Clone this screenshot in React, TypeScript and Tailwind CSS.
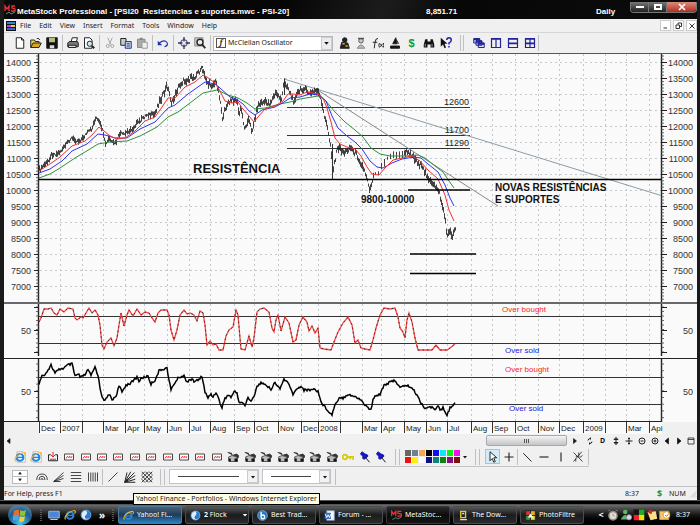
import React from "react";

type Pt = [number, number];

const parse = (s: string): Pt[] =>
  s.trim().split(/\s+/).map((p) => p.split(",").map(Number) as Pt);

/* ---------- chart data ---------- */

const MONTHS: [number, string][] = [
  [39, "Dec"], [60, "2007"], [82, ""], [103, "Mar"], [125, "Apr"], [144, "May"], [167, "Jun"],
  [189, "Jul"], [210, "Aug"], [234, "Sep"], [254, "Oct"], [278, "Nov"], [301, "Dec"], [318, "2008"],
  [340, ""], [362, "Mar"], [381, "Apr"], [404, "May"], [426, "Jun"], [447, "Jul"], [471, "Aug"],
  [492, "Sep"], [515, "Oct"], [538, "Nov"], [559, "Dec"], [583, "2009"], [605, ""], [626, "Mar"], [649, "Apr"],
];

const PRICE = parse(
  "39,170 41,169 44,165 48,162 51,155 54,154 57,154 61,151 66,145 71,138 75,140 79,141 83,138 87,133 92,129 94,122 96,118 99,122 102,128 104,139 106,145 109,138 112,143 116,143 120,133 124,135 128,131 132,130 136,124 140,121 144,117 148,114 152,116 155,114 157,107 160,100 164,94 167,85 169,92 172,104 174,98 178,88 182,82 186,80 190,79 194,77 198,73 201,69 203,72 205,76 208,84 212,85 216,82 219,92 222,113 223,122 225,108 228,104 232,100 237,100 239,115 241,108 245,130 248,118 252,131 255,118 258,105 263,102 270,103 276,93 282,100 284,81 288,87 293,101 298,93 303,88 310,94 317,90 320,97 323,110 326,121 329,137 331,147 333,172 335,160 338,147 345,153 350,147 357,155 362,165 367,177 370,190 373,177 378,172 385,162 390,157 397,154 403,157 408,150 413,156 420,165 427,175 432,185 438,188 441,200 444,212 447,234 450,232 453,236 455,227",
);
const RED =
  "39,171 50,164 60,157 72,146 85,141 92,135 99,127 104,131 110,136 117,139 125,138 135,131 145,121 155,117 162,107 168,98 175,98 185,87 195,82 203,75 207,77 215,83 220,91 225,101 232,103 238,102 243,109 249,116 254,122 258,117 265,109 275,106 283,101 288,94 293,94 300,95 307,92 318,94 323,98 327,108 331,122 335,138 340,144 347,147 355,149 361,156 367,167 372,174 379,175 385,168 393,160 402,158 412,156 420,161 428,170 438,179 445,195 449,210 454,221";
const BLUE =
  "39,173 50,169 62,161 72,151 87,144 98,134 105,135 115,138 127,138 140,129 155,122 168,108 175,105 188,94 205,82 215,84 220,88 230,97 236,99 243,104 249,111 255,115 262,110 275,107 284,102 290,98 300,97 310,94 319,95 326,101 332,116 338,128 347,136 355,142 362,149 370,161 377,167 383,168 392,163 402,159 414,157 421,158 428,164 438,172 445,185 450,198 454,206";
const GREEN =
  "39,178 50,174 60,168 75,158 90,149 98,144 110,142 127,141 140,136 157,127 168,117 178,112 190,103 203,93 217,90 228,95 238,98 247,103 255,109 265,108 280,104 290,102 300,99 312,97 318,96 325,100 335,112 345,122 355,130 363,137 371,148 380,154 390,156 405,156 418,155 425,158 435,166 443,172 449,181 454,188";
const OSC1 =
  "39,322 41,318 44,309 48,309 51,308 54,313 57,315 60,309 64,312 68,308 73,309 75,318 77,320 81,317 83,318 86,313 89,308 92,313 95,310 98,315 100,325 102,345 104,349 107,342 111,338 114,346 117,338 119,325 121,313 124,326 127,315 129,310 133,316 137,309 141,315 145,312 149,313 152,318 155,322 158,313 161,310 167,310 169,315 171,330 174,340 177,330 180,315 184,310 187,314 190,313 194,315 197,321 200,311 203,313 205,325 207,345 210,341 213,345 216,344 219,350 223,350 226,336 229,330 233,327 236,310 238,315 240,338 241,349 245,350 249,336 252,347 254,338 257,312 260,309 264,308 269,312 272,328 274,332 276,320 278,315 281,331 285,317 289,323 293,342 296,340 299,325 303,317 307,322 309,331 312,326 315,333 318,328 320,348 324,349 331,350 334,342 338,332 343,323 348,317 352,325 355,343 358,340 361,348 365,349 370,350 373,340 376,328 380,315 384,308 390,309 395,308 398,317 400,328 403,332 405,338 407,320 409,313 412,322 415,338 418,350 425,350 432,350 436,345 440,350 447,350 450,348 455,344";
const OSC2 = parse(
  "39,384 42,376 46,373 51,365 55,373 60,369 64,368 68,365 72,364 75,376 79,374 80,378 86,374 88,369 91,376 95,367 98,375 100,388 102,396 105,401 109,394 112,400 116,396 119,386 122,392 126,385 131,383 137,377 139,381 142,378 148,376 151,384 155,380 159,371 163,369 167,368 169,380 171,390 174,384 179,377 184,376 187,382 190,379 194,381 199,380 202,376 205,392 208,398 211,394 213,397 216,392 219,400 222,408 224,400 228,395 231,397 235,391 237,393 239,402 243,403 245,406 248,397 251,402 254,396 257,386 263,382 266,386 271,389 275,383 280,389 284,379 288,383 293,394 298,388 301,386 304,390 309,390 313,389 318,391 321,402 325,407 332,415 335,404 340,397 343,398 348,394 355,397 360,399 366,406 371,410 373,400 376,395 380,394 384,385 391,382 395,380 400,388 406,385 412,388 417,395 421,403 425,408 430,407 435,409 438,405 440,411 443,408 447,415 450,408 455,402",
);

const valueAt = (pts: Pt[], x: number) => {
  for (let i = 1; i < pts.length; i++) {
    const [x0, y0] = pts[i - 1];
    const [x1, y1] = pts[i];
    if (x <= x1) return y0 + ((y1 - y0) * (x - x0)) / (x1 - x0);
  }
  return pts[pts.length - 1][1];
};
const noise = (i: number) => {
  const v = Math.sin(i * 12.9898) * 43758.5453;
  return v - Math.floor(v) - 0.5;
};

// one high/low bar per trading day
const bars = Array.from({ length: 417 }, (_, i) => {
  const x = 39.5 + i;
  const y = valueAt(PRICE, x) + noise(i) * (x < 150 ? 3 : 5);
  const half = (x < 150 ? 0.8 : 1.4) + Math.abs(noise(i + 700)) * 5;
  const gap = x > 374 && x < 404 && i % 3 !== 0;
  return gap ? "" : `M${x} ${(y - half).toFixed(1)}V${(y + half).toFixed(1)}`;
}).join("");

const momentum = Array.from({ length: 417 }, (_, i) => {
  const x = 39 + i;
  return `${x},${(valueAt(OSC2, x) + noise(i + 31) * 2.4).toFixed(1)}`;
}).join(" ");

const levels = Array.from({ length: 15 }, (_, i) => ({ v: 14000 - i * 500, y: 62.5 + i * 16 }));

const ticks = (y0: number, y1: number, step: number) => {
  let d = "";
  for (let y = y0; y < y1; y += step) d += `M36 ${y}H39M661 ${y}H664`;
  return d;
};

function Chart() {
  return (
    <svg viewBox="4 53 693 381" className="block w-full bg-[#fafafa]" fontFamily="'Liberation Sans', Arial, sans-serif" role="img" aria-label="PSI-20 price chart">
      <rect x="4" y="422" width="34" height="12" fill="#f0f0f1" />
      <rect x="662" y="422" width="35" height="12" fill="#f0f0f1" />
      <g stroke="#c3c8ce" strokeDasharray="2 3" fill="none">
        {levels.map((l) => <path key={l.v} d={`M40 ${l.y}H661`} />)}
        {MONTHS.map(([x], i) => i > 0 && <path key={x} d={`M${x + 0.5} 54V421`} />)}
      </g>
      <path d="M4 53.5H697" stroke="#55595c" />
      <path d="M38.5 54V302M38.5 304V356M38.5 359V422M661.5 54V302M661.5 304V356M661.5 359V422" stroke="#222" strokeWidth="1.4" />
      <path d={ticks(56, 302, 3.2) + ticks(307, 355, 4.5) + ticks(364, 420, 6.7)} stroke="#444" strokeWidth=".8" />
      <g stroke="#222">
        {levels.map((l) => <path key={l.v} d={`M34 ${l.y}H39M661 ${l.y}H667`} />)}
        <path d="M34 307.5H39M34 330.5H39M34 352.5H39M661 307.5H667M661 330.5H667M661 352.5H667M34 391.5H39M661 391.5H667" />
      </g>
      <g fontSize="9" fill="#333">
        {levels.map((l) => (
          <React.Fragment key={l.v}>
            <text x="31" y={l.y + 3.5} textAnchor="end">{l.v}</text>
            <text x="693" y={l.y + 3.5} textAnchor="end">{l.v}</text>
          </React.Fragment>
        ))}
        <text x="31" y="334" textAnchor="end">50</text>
        <text x="693" y="334" textAnchor="end">50</text>
        <text x="31" y="395" textAnchor="end">50</text>
        <text x="693" y="395" textAnchor="end">50</text>
      </g>

      <path d="M4 303H697" stroke="#6a6a6e" strokeWidth="2" />
      <path d="M4 358.5H697M4 421.5H662" stroke="#222" />
      <path d="M39 316.5H661M39 343.5H661M39 377.5H661M39 404.5H661" stroke="#333" />

      <path d="M287 107.5H470M287 135.5H470M287 148.5H470" stroke="#333" />
      <path d="M284 79L661 195.5" stroke="#8b9da5" />
      <path d="M316 89L498 206" stroke="#888" />
      <path d={bars} stroke="#111" strokeWidth=".8" />
      <path d="M332.5 144V179M284.5 79V95M202.5 66V68" stroke="#333" />
      <g fill="none" strokeWidth="1">
        <polyline points={GREEN} stroke="#2f8f3a" />
        <polyline points={BLUE} stroke="#3232ee" />
        <polyline points={RED} stroke="#f23030" />
      </g>
      <path d="M39 179.5H661" stroke="#000" strokeWidth="1.6" />
      <path d="M408 190H470M410 254H476M410 273.5H476" stroke="#000" strokeWidth="1.5" />

      <polyline points={OSC1} fill="none" stroke="#f44" strokeWidth="1.3" />
      <polyline points={OSC1} fill="none" stroke="#333" strokeWidth="1" strokeDasharray="1.5 3" />
      <polyline points={momentum} fill="none" stroke="#000" strokeWidth="1.5" />

      <g fontSize="9" fill="#222" textAnchor="end">
        <text x="469" y="105">12600</text>
        <text x="469" y="133">11700</text>
        <text x="469" y="146">11290</text>
      </g>
      <g fontWeight="bold" fill="#111">
        <text x="193" y="173" fontSize="13">RESISTÊNCIA</text>
        <text x="361" y="203" fontSize="10">9800-10000</text>
        <text x="495" y="191" fontSize="10">NOVAS RESISTÊNCIAS</text>
        <text x="495" y="203" fontSize="10">E SUPORTES</text>
      </g>
      <g fontSize="8">
        <text x="502" y="312" fill="#f22">Over bought</text>
        <text x="505" y="353" fill="#22d">Over sold</text>
        <text x="505" y="372" fill="#f22">Over bought</text>
        <text x="509" y="411" fill="#22d">Over sold</text>
      </g>
      <g fontSize="8" fill="#222">
        {MONTHS.map(([x, m]) => (
          <React.Fragment key={x}>
            <path d={`M${x + 0.5} 422V433`} stroke="#333" />
            {m && <text x={x + 2} y="431">{m === "Apr" && x > 600 ? "Api" : m}</text>}
          </React.Fragment>
        ))}
      </g>
    </svg>
  );
}

/* ---------- shared pieces ---------- */

function Icon({ children, className = "h-3 w-3" }: { children: React.ReactNode; className?: string }) {
  return (
    <svg viewBox="0 0 16 16" className={className} fill="none" stroke="#222" strokeWidth="1.3" aria-hidden="true">
      {children}
    </svg>
  );
}

function Tool({ label, wide, children }: { label: string; wide?: boolean; children: React.ReactNode }) {
  return (
    <button aria-label={label} className={`flex h-4 shrink-0 items-center justify-center ${wide ? "w-[17px]" : "w-4"}`}>
      <Icon>{children}</Icon>
    </button>
  );
}

const Sep = () => <span className="h-4 w-px shrink-0 bg-[#c0c0c4]" />;

const binoculars = (
  <>
    <path d="M3 3h3v3h4V3h3l2 7v4h-5v-4H6v4H1v-4z" fill="#111" stroke="none" />
    <path d="M3 9v4M12 9v4" stroke="#999" />
  </>
);

const ieGlyph = (
  <>
    <circle cx="8" cy="8.5" r="4.6" stroke="#2486d8" strokeWidth="2.6" />
    <path d="M4 8.5h9" stroke="#2486d8" strokeWidth="2" />
    <path d="M2 14C-1 10 8 2 14 2c2 1 1 3 0 4" stroke="#f0b429" strokeWidth="1.5" />
  </>
);

const dropArrow = <path d="M4 6h8l-4 5z" fill="#111" stroke="none" />;

/* ---------- window chrome ---------- */

function TitleBar() {
  return (
    <header className="flex h-[19px] items-center bg-[linear-gradient(115deg,#0a0a0b_0%,#050505_40%,#1c1c1d_55%,#070707_65%,#0c0c0c_100%)] font-['Liberation_Sans',sans-serif] text-[8px] font-bold text-white">
      <svg viewBox="0 0 13 12" className="h-3 w-[13px] shrink-0" aria-hidden="true">
        <path d="M1 7V2l2 3 2-3v5M11 2H8v2l3 1v2H7" fill="none" stroke="#e33" strokeWidth="1.3" />
        <path d="M2 10l3-2 2 2 4-2" stroke="#4a9a8a" fill="none" />
      </svg>
      <h1 className="flex-1 whitespace-pre pt-1">MetaStock Professional - [PSI20  Resistencias e suportes.mwc - PSI-20]</h1>
      <span className="w-[170px] pt-1">8,851.71</span>
      <span className="w-[34px] pt-1">Daily</span>
      <div className="mt-0.5 flex h-[11px] w-[67px] self-start overflow-hidden rounded-b-sm border border-t-0 border-[#777]">
        <button aria-label="Minimize" className="flex flex-1 items-center justify-center bg-linear-to-b from-[#77797b] to-[#222]">
          <span className="h-0.5 w-2 bg-white" />
        </button>
        <button aria-label="Restore" className="flex flex-1 items-center justify-center border-x border-[#777] bg-linear-to-b from-[#77797b] to-[#222]">
          <span className="h-1.5 w-2 border-2 border-white" />
        </button>
        <button aria-label="Close" className="flex w-[29px] items-center justify-center bg-linear-to-b from-[#d98a80] to-[#b22a1c]">
          <Icon className="h-2 w-2"><path d="M2 2l12 12M14 2L2 14" stroke="#fff" strokeWidth="3.5" /></Icon>
        </button>
      </div>
    </header>
  );
}

function MenuBar() {
  return (
    <nav className="flex h-[14px] items-center border-b border-[#d6d6da] pl-0.5">
      <svg viewBox="0 0 10 10" className="mr-1 h-2.5 w-2.5 shrink-0" aria-hidden="true">
        <path d="M0 0h10v10H0z" fill="#111" />
        <path d="M1 1h8v2H1z" fill="#38c" /><path d="M1 4h4v2H1z" fill="#e3c" /><path d="M5 4h4v2H5z" fill="#ec3" /><path d="M1 7h8v2H1z" fill="#36c" />
      </svg>
      <div className="flex flex-1 gap-2">
        {["File", "Edit", "View", "Insert", "Format", "Tools", "Window", "Help"].map((m) => (
          <button key={m} className="leading-3">{m}</button>
        ))}
      </div>
      <div className="flex gap-0.5">
        {[["Minimize chart", "M3 12h7"], ["Restore chart", "M2 6h7v7H2zM6 5V2h7v7h-3"], ["Close chart", "M3 3l10 10M13 3L3 13"]].map(([l, d]) => (
          <button key={l} aria-label={l} className="flex h-[11px] w-[11px] items-center justify-center border border-[#ccc] bg-white">
            <Icon className="h-2 w-2"><path d={d} strokeWidth="2" stroke="#333" /></Icon>
          </button>
        ))}
      </div>
    </nav>
  );
}

function MainToolbar() {
  return (
    <div className="flex h-5 items-center pl-2">
      <Tool label="New"><path d="M3 1h7l3 3v11H3z" fill="#fff" /><path d="M10 1v3h3" /></Tool>
      <Tool label="Open"><path d="M1 14V4h5l1 2h5v3" fill="#f4d24a" /><path d="M1 14l3-6h11l-3 6z" fill="#d8a820" /><path d="M9 2q3-1 4 2" /></Tool>
      <Tool label="Save"><path d="M1 1h14v14H1z" fill="#111" /><path d="M4 1h8v6H4z" fill="#b9bd7c" stroke="none" /><path d="M5 11h6v4H5z" fill="#ddd" stroke="none" /></Tool>
      <span className="flex w-[5px] justify-center"><Sep /></span>
      <Tool label="Print"><path d="M5 8l2-7h7l-2 7" fill="#fff" /><path d="M1 8l2-2h11l1 2v5H1z" fill="#777" /><path d="M2 11h10v3H2z" fill="#ddd" /></Tool>
      <Tool label="Print preview"><path d="M2 1h7l3 3v11H2z" fill="#fff" /><circle cx="9" cy="9" r="3.5" fill="#cde6f5" /><path d="M12 12l3 3" strokeWidth="2.5" /></Tool>
      <span className="flex w-[5px] justify-center"><Sep /></span>
      <Tool label="Cut"><g stroke="#a5a5a8"><path d="M5 1l4 9M11 1L7 10" /><circle cx="5" cy="12" r="2" /><circle cx="11" cy="12" r="2" /></g></Tool>
      <Tool label="Copy"><path d="M1 2h7v9H1z" fill="#ccc" /><path d="M7 6h8v9H7z" fill="#c4cce8" stroke="#223a88" /><path d="M9 9h4M9 12h4" stroke="#223a88" /></Tool>
      <Tool label="Paste"><path d="M2 3h10v11H2z" fill="#aaa" stroke="#888" /><path d="M5 1h4v3H5z" fill="#888" stroke="none" /><path d="M8 7h7v8H8z" fill="#eee" stroke="#999" /></Tool>
      <span className="flex w-[5px] justify-center"><Sep /></span>
      <Tool label="Undo"><path d="M3 8q7-5 10-1t-3 6" stroke="#2233aa" strokeWidth="1.6" /><path d="M1 5v6h6z" fill="#2233aa" stroke="none" /></Tool>
      <span className="flex w-[5px] justify-center"><Sep /></span>
      <Tool label="Crosshair"><circle cx="8" cy="8" r="4.5" stroke="#336" /><path d="M8 0v6M8 10v6M0 8h6M10 8h6" stroke="#336" strokeWidth="1.8" /></Tool>
      <Tool label="Zoom"><path d="M1 1h11v11H1z" fill="#ccc" stroke="#888" /><circle cx="8" cy="7" r="4" fill="#e4f0f4" strokeWidth="1.8" /><path d="M11 10l4 5" strokeWidth="2.5" /></Tool>
      <span className="flex w-[5px] justify-center"><Sep /></span>
      <label className="relative flex h-[15px] w-[120px] items-center border border-[#b8b8bc] bg-white pl-0.5">
        <span className="flex h-2.5 w-2.5 items-center justify-center border border-[#555] font-serif text-[8px] leading-none font-bold italic">f</span>
        <select aria-label="Indicator" className="h-full flex-1 appearance-none bg-transparent pl-0.5 outline-none">
          <option>McClellan Oscillator</option>
        </select>
        <span className="pointer-events-none absolute inset-y-0 right-0 flex w-[11px] items-center justify-center border border-[#ccc] bg-[#ececef]"><Icon className="h-2.5 w-2.5">{dropArrow}</Icon></span>
      </label>
      <span className="w-0.5" />
      <Tool wide label="Explorer"><circle cx="9" cy="4" r="3" fill="#222" /><path d="M3 15l2-8 8 1 2 7z" fill="#222" /><path d="M6 9h3M10 12h3" stroke="#e0b020" strokeWidth="2" /></Tool>
      <Tool wide label="Expert advisor"><circle cx="8" cy="5" r="3" fill="#ccc" stroke="#555" /><path d="M4 2h8" strokeWidth="2" stroke="#555" /><path d="M3 15q5-9 10 0z" fill="#bbb" stroke="#888" /></Tool>
      <Tool wide label="Indicator builder"><path d="M8 2q-3-1-4 5l-1 8M1 7h6M10 8q-2 3 0 6M15 8q2 3 0 6M11 9l3 4M14 9l-3 4" /></Tool>
      <Tool wide label="System tester"><path d="M9 1l-4 8h6zM2 12h12v3H2z" fill="#111" /><path d="M10 4l3 5" /></Tool>
      <button aria-label="OptionScope" className="w-[17px] shrink-0 font-['Liberation_Sans'] text-[11px] font-bold text-[#129a2c]">$</button>
      <Tool wide label="Search">{binoculars}</Tool>
      <Tool wide label="Context help"><path d="M1 1v12l3-3 2 5 2-1-2-5h4z" fill="#111" stroke="none" /><path d="M9 4q0-3 3-3t3 3-3 4v2M12 12v2" stroke="#22a" strokeWidth="2" /></Tool>
      <span className="flex w-4 items-center justify-center gap-0.5"><Sep /><Sep /></span>
      <Tool wide label="Cascade"><g stroke="#229" fill="#dde"><path d="M1 2h8v6H1zM4 5h8v6H4zM7 8h8v6H7z" /><path d="M1 3h8M4 6h8M7 9h8" strokeWidth="2.5" /></g></Tool>
      <Tool wide label="Tile columns"><path d="M2 2h12v12H2zM8 2v12M2 3h12" stroke="#229" strokeWidth="1.6" /></Tool>
      <Tool wide label="Tile rows"><path d="M2 2h12v12H2zM2 8h12M2 3h12M2 9h12" stroke="#229" strokeWidth="1.6" /></Tool>
      <Tool wide label="Tile grid"><path d="M2 2h12v12H2zM8 2v12M2 8h12M2 3h12M2 9h12" stroke="#229" strokeWidth="1.6" /></Tool>
      <Sep />
    </div>
  );
}

const NAV: [string, string][] = [
  ["Refresh", "M4 7q0-4 5-4M9 1v4M12 9q0 4-5 4M7 11v4"],
  ["Daily", ""],
  ["Fit height", "M8 1v14M4 5l4-4 4 4zM4 11l4 4 4-4z"],
  ["Move", "M8 1v14M1 8h14M6 3h4M6 13h4"],
  ["Zoom out", "M8 2a6 6 0 100 12A6 6 0 008 2M5 8h6"],
  ["Zoom in", "M8 2a6 6 0 100 12A6 6 0 008 2M5 8h6M8 5v6"],
];

function ScrollRow() {
  return (
    <div className="flex h-[13px] items-center text-[#111]">
      <button aria-label="Scroll left" className="w-2.5"><Icon className="h-2 w-2"><path d="M12 3v10L6 8z" fill="#111" /></Icon></button>
      <div className="flex flex-1 justify-end">
        <div className="flex h-[11px] w-[81px] items-center justify-center gap-px rounded-xs border border-[#a8a8ac] bg-linear-to-b from-[#f4f4f4] to-[#c4c4c8]">
          <span className="h-1 w-px bg-[#555]" /><span className="h-1 w-px bg-[#555]" /><span className="h-1 w-px bg-[#555]" />
        </div>
      </div>
      <button aria-label="Scroll right" className="flex w-4 justify-center"><Icon className="h-2 w-2"><path d="M5 3v10l6-5z" fill="#111" /></Icon></button>
      <div className="flex">
        {NAV.map(([l, d]) => (
          <button key={l} aria-label={l} className="flex h-3 w-[13px] items-center justify-center font-bold">
            {d ? <Icon className="h-2 w-2"><path d={d} strokeWidth="2" /></Icon> : "D"}
          </button>
        ))}
      </div>
      <div className="flex">
        {["M11 2v12L4 8z", "M5 2v12l7-6z", "M2 2h12v12H2zM2 5h12"].map((d, i) => (
          <button key={d} aria-label={["Previous chart", "Next chart", "Chart options"][i]} className="flex w-3 justify-center">
            <Icon className="h-2 w-2"><path d={d} fill={i < 2 ? "#111" : "none"} strokeWidth="1.6" /></Icon>
          </button>
        ))}
      </div>
    </div>
  );
}

const PALETTE = [
  "bg-[#666]", "bg-[#6f8090]", "bg-[#f5a85a]", "bg-black", "bg-[#1010f0]", "bg-[#10e8f8]", "bg-[#10f010]", "bg-[#f010e8]",
  "bg-[#f01010]", "bg-[#f8f010]", "bg-white", "bg-[#101080]", "bg-[#108080]", "bg-[#108010]", "bg-[#801080]", "bg-[#801010]",
];

function TemplateBar() {
  return (
    <div className="flex">
      <div className="flex h-5 items-center border-b border-[#c4c4c8] pl-2">
        <div className="flex w-[377px] justify-between">
          {[1, 2].map((n) => <Tool key={n} label={`Web page ${n}`}><path d="M4 1h8l3 3v11H4z" fill="#fff" stroke="#bbb" />{ieGlyph}</Tool>)}
          <Tool label="Insert template"><path d="M5 5H2v8h12V5h-3" /><path d="M8 1v6M5 5l3 3 3-3M4 11h8" stroke="#d22" /></Tool>
          {Array.from({ length: 10 }, (_, i) => (
            <Tool key={`t${i}`} label={`Template ${i + 1}`}><path d="M2 4h12v8H2z" fill="#fff" stroke="#444" /><path d="M4 10l2-3 2 2 1-2 2 2 1-2" stroke="#e22" /></Tool>
          ))}
          {Array.from({ length: 7 }, (_, i) => (
            <Tool key={`e${i}`} label={`Exploration ${i + 1}`}><path d="M1 2l5 1 1 3 6-2 3 3-2 3" fill="#333" stroke="#333" /><path d="M2 8l5-2 6 2 1 6H3z" fill="#bbb" stroke="#555" /><path d="M2 10h3v4H2zM10 10h4v4h-4z" fill="#111" stroke="none" /></Tool>
          ))}
          <Tool label="Key"><circle cx="4" cy="8" r="3" stroke="#d8cc10" strokeWidth="2.4" /><path d="M7 8h8v4M11 8v3" stroke="#d8cc10" strokeWidth="2.4" /></Tool>
          {[1, 2].map((n) => <Tool key={`p${n}`} label={`Pin ${n}`}><path d="M2 4l2-3 4 3 3 1 1 2-5 4-2-1 0-3z" fill="#1818b8" stroke="#1818b8" /><path d="M9 9l5 6" stroke="#111" /></Tool>)}
        </div>
        <span className="flex w-4 justify-center gap-[3px]"><Sep /><Sep /></span>
        <div className="grid grid-cols-8 gap-px">
          {PALETTE.map((c, i) => <button key={i} aria-label={`Colour ${i + 1}`} className={`h-1.5 w-1.5 ${c}`} />)}
        </div>
        <button aria-label="More colours" className="flex w-[9px] justify-center"><Icon className="h-2 w-2">{dropArrow}</Icon></button>
        <span className="flex w-4 justify-center gap-[3px]"><Sep /><Sep /></span>
        <button aria-label="Select" className="flex h-[15px] w-[15px] items-center justify-center border border-[#9cc8e0] bg-[#d2ebf8]">
          <Icon><path d="M4 1v12l3-3 2 5 2-1-2-5h4z" fill="#fff" /></Icon>
        </button>
        <Tool wide label="Crosshair line"><path d="M8 2v12M2 8h12" strokeWidth="1.5" /></Tool>
        <Sep />
        <Tool wide label="Trendline"><path d="M3 3l11 11" /></Tool>
        <Tool wide label="Horizontal line"><path d="M2 8h12" strokeWidth="1.5" /></Tool>
        <Tool wide label="Vertical line"><path d="M8 2v12" strokeWidth="1.5" /></Tool>
        <Tool wide label="Symbols"><path d="M2 2l12 12M13 1L2 14M5 7h5M10 9l4-3M9 2v4M5 10v4" strokeWidth="1.1" /></Tool>
        <span className="w-0.5" />
        <Sep />
      </div>
    </div>
  );
}

function LineSelect({ label, width }: { label: string; width: string }) {
  return (
    <label className={`relative block h-[15px] border border-[#c4c4c8] bg-white ${width}`}>
      <select aria-label={label} className="block h-full w-full appearance-none bg-transparent outline-none" />
      <span className="pointer-events-none absolute inset-0 flex items-center gap-2 pl-2">
        <span className="h-px flex-1 bg-[#444]" />
        <span className="flex h-full w-[11px] items-center justify-center border border-[#ccc] bg-[#f2f2f4]"><Icon className="h-2 w-2">{dropArrow}</Icon></span>
      </span>
    </label>
  );
}

function DrawingBar() {
  return (
    <div className="flex h-5 items-center border-b border-[#c4c4c8] pl-2">
      <div className="flex h-[14px] w-4 flex-col border border-[#bbb] bg-white">
        <button aria-label="Thicker" className="flex flex-1 items-center justify-center border-b border-[#bbb]"><Icon className="h-1 w-1"><path d="M2 13h12L8 4z" fill="#111" /></Icon></button>
        <button aria-label="Thinner" className="flex flex-1 items-center justify-center"><Icon className="h-1 w-1"><path d="M2 3h12l-6 9z" fill="#111" /></Icon></button>
      </div>
      <span className="w-[5px]" />
      <Tool wide label="Fibonacci arcs"><path d="M1 12q0-8 7-8t7 8M4 12q0-5 4-5t4 5M6.5 12q0-2 1.500-2t1.500 2" strokeWidth="1.1" /></Tool>
      <Tool wide label="Fibonacci fan"><path d="M1 14L14 2M1 14l13-8M1 14l13-4M1 14h9" strokeWidth="1.1" /></Tool>
      <Tool wide label="Retracement"><path d="M1 2h14M1 6h14M1 10h14M1 14h14" strokeWidth="1.1" /></Tool>
      <Tool wide label="Time zones"><path d="M2 2v12M5 2v12M8 2v12M11 2v12M14 2v12" strokeWidth="1.1" /></Tool>
      <span className="flex w-[3px] justify-center"><Sep /></span>
      <Tool wide label="Gann line"><path d="M2 14L14 2" strokeWidth="1.1" /></Tool>
      <Tool wide label="Gann fan"><path d="M1 15L4 2M1 15L9 1M1 15L14 2M1 15l14-9M1 15l14-4M1 15h14" /></Tool>
      <Tool wide label="Gann grid"><path d="M1 1l14 14M1 6l9 9M6 1l9 9M1 11l4 4M11 1l4 4M15 1L1 15M10 1L1 10M15 6l-9 9M15 11l-4 4M5 1L1 5" strokeWidth="1.1" /></Tool>
      <span className="flex w-[14px] justify-center gap-[3px]"><Sep /><Sep /></span>
      <LineSelect label="Line style" width="w-[90px]" />
      <span className="w-[3px]" />
      <LineSelect label="Line weight" width="w-[69px]" />
      <span className="w-1" />
      <Sep />
    </div>
  );
}

function StatusBar() {
  return (
    <footer className="flex h-[13px] items-center">
      <span className="flex-1">For Help, press F1</span>
      <span className="w-8">8:37</span>
      <span className="w-3 text-[9px] font-bold text-[#129a2c]">$</span>
      <span className="w-5">NUM</span>
      <Icon className="h-2 w-2"><path d="M2 15L15 2M7 15l8-8M12 15l3-3" stroke="#aaa" /></Icon>
    </footer>
  );
}

/* ---------- taskbar ---------- */

const globe = (
  <>
    <circle cx="8" cy="8" r="6.5" fill="#dcecf8" stroke="#6aa4d8" />
    <path d="M8 2q6 0 6 6t-6 5q-3-2 0-5t0-6" fill="#2a7ad0" stroke="none" />
  </>
);

const IDLE = "bg-linear-to-b from-[#55585a] via-[#1b1c1d] to-[#2a2b2c] border-[#4a4c4e]";

const TASKS: { text: string; bold?: string; tone: string; icon: React.ReactNode }[] = [
  { text: "Yahoo! Fi...", tone: "bg-linear-to-b from-[#4a6276] via-[#1d3c58] to-[#2b84c4] border-[#4f7898]", icon: ieGlyph },
  { text: "Flock", bold: "2", tone: IDLE, icon: globe },
  { text: "Best Trad...", tone: IDLE, icon: <><circle cx="8" cy="8" r="7" fill="#2a78c4" stroke="#7ab0e0" /><path d="M6 3v9M6 8q5-2 5 2t-5 2" stroke="#fff" strokeWidth="2" /></> },
  { text: "Forum - ...", tone: IDLE, icon: <><path d="M4 1h11v14H4z" fill="#f4f8ff" stroke="#89a" /><path d="M1 4h9v9H1z" fill="#3a6cc0" stroke="none" /><path d="M2 6l2 5 2-4 2 4 2-5" stroke="#fff" /></> },
  { text: "MetaStoc...", tone: "bg-linear-to-b from-[#2a2b2c] via-[#0c0c0c] to-[#161616] border-[#3a3a3a]", icon: <><path d="M1 9V2l3 4 3-4v7M15 2h-5v3l5 1v3H9" stroke="#e33" strokeWidth="1.8" /><path d="M2 14l5-3 3 2 5-3" stroke="#4a9a8a" /></> },
  { text: "The Dow...", tone: IDLE, icon: <><path d="M4 2h7v9H4z" fill="#222" stroke="#e8c838" strokeWidth="2" /><path d="M6 5h3M3 14h10" strokeWidth="2" stroke="#ddd" /></> },
  { text: "PhotoFiltre", tone: IDLE, icon: <><path d="M1 1h7v7H1z" fill="#d33" /><path d="M8 1h7v7H8z" fill="#e8b020" /><path d="M1 8h7v7H1z" fill="#2a9a3a" /><path d="M8 8h7v7H8z" fill="#e8e030" /><path d="M4 11l4-6 4 6z" fill="#fff" stroke="none" /></> },
];

function Taskbar() {
  return (
    <div className="relative flex h-5 items-center bg-linear-to-b from-[#6a6c6e] via-[#151515] to-[#000] text-white">
      <div role="tooltip" className="absolute -top-3 left-[133px] z-10 border border-black bg-[#fdfde6] px-0.5 leading-[10px] whitespace-nowrap text-[#222]">
        Yahoo! Finance - Portfolios - Windows Internet Explorer
      </div>
      <button aria-label="Start" className="ml-2 flex h-5 w-6 items-center justify-center rounded-full bg-[radial-gradient(circle_at_50%_90%,#4cc4e8,#1d5c8c_55%,#7a9aac_100%)]">
        <svg viewBox="0 0 16 16" className="h-4 w-4" aria-hidden="true">
          <path d="M2 4q3-2 5-1v5q-3-1-6 1z" fill="#f06a30" /><path d="M8 3q3 2 6 0l-1 5q-3 2-5 0z" fill="#8cc63e" />
          <path d="M1 9q3-2 6-1l-1 5q-3-1-5 1z" fill="#4aa8e8" /><path d="M8 9q2 2 5 0l-1 5q-3 2-5 0z" fill="#f8cc3c" />
        </svg>
      </button>
      <span className="ml-2 h-3 w-0.5 border-x border-dotted border-[#555]" />
      <div className="ml-1 flex flex-none items-center">
        <button aria-label="Show desktop" className="flex w-4 justify-center"><Icon><path d="M1 3h14v9H1z" fill="#4a86d8" stroke="#9ab8e0" /><path d="M3 14h10" stroke="#ccc" /></Icon></button>
        <button aria-label="Internet Explorer" className="flex w-4 justify-center"><Icon>{ieGlyph}</Icon></button>
        <button aria-label="Flock" className="flex w-4 justify-center"><Icon>{globe}</Icon></button>
        <button aria-label="More" className="w-4 text-[10px] leading-none font-bold">»</button>
      </div>
      <span className="ml-0.5 h-3 w-0.5 border-x border-dotted border-[#555]" />
      <div className="ml-1 flex flex-1 gap-[3px]">
        {TASKS.map((t) => (
          <button key={t.text} className={`flex h-[18px] w-16 shrink-0 items-center gap-[3px] overflow-hidden rounded-xs border pl-1 whitespace-nowrap ${t.tone}`}>
            <Icon className="h-[11px] w-[11px] shrink-0">{t.icon}</Icon>
            <span>{t.bold && <b>{t.bold} </b>}{t.text}</span>
            {t.bold && <Icon className="ml-auto h-1.5 w-1.5"><path d="M2 5h12l-6 7z" fill="#fff" stroke="none" /></Icon>}
          </button>
        ))}
      </div>
      <div className="flex items-center gap-px pr-2.5">
        <button aria-label="Show hidden icons" className="w-2.5 text-[9px] font-bold">&lt;</button>
        <Icon><circle cx="8" cy="9" r="5.5" fill="#ddd" stroke="#987" strokeWidth="2" /><path d="M8 6v3h2M2 3l2-2M14 3l-2-2" stroke="#a98" /></Icon>
        <Icon><circle cx="7" cy="4" r="3" fill="#5cb85c" stroke="none" /><path d="M1 14q6-12 11 0z" fill="#5cb85c" stroke="none" /><circle cx="12" cy="11" r="3.5" fill="#dde" stroke="#889" /></Icon>
        <Icon><path d="M1 1h7v7H1z" fill="#d22" stroke="none" /><path d="M1 1h7v7H1z" fill="#111" /><path d="M8 1h7v7H8z" fill="#2a2" stroke="none" /><path d="M1 8h7v7H1z" fill="#e22" stroke="none" /><path d="M8 8h7v7H8z" fill="#fd0" stroke="none" /></Icon>
        <Icon><path d="M2 4l11-1 2 10-9 2z" fill="#f6e08a" stroke="none" /><path d="M4 1l5 1-2 5-4-2z" fill="#d22" stroke="none" /></Icon>
        <Icon><path d="M1 3h12v11H1z" fill="#f4c878" stroke="#d89a30" /><circle cx="10" cy="8" r="4.5" fill="#fff" stroke="#e0a030" /><path d="M8 8l2 2 3-4" stroke="#c70" /></Icon>
        <time className="ml-1">8:37</time>
      </div>
    </div>
  );
}

export default function App() {
  return (
    <div className="min-h-screen bg-[#050505] font-['Noto_Sans','Liberation_Sans',sans-serif] text-[7px] leading-3 text-[#222]">
      <div className="border-r-[3px] border-l-4 border-[#1a1a1b]">
        <TitleBar />
        <div className="bg-[#f0f0f1]">
          <MenuBar />
          <MainToolbar />
          <Chart />
          <ScrollRow />
          <TemplateBar />
          <DrawingBar />
          <StatusBar />
        </div>
      </div>
      <div className="h-[5px] border-y border-[#555] bg-black" />
      <Taskbar />
    </div>
  );
}
